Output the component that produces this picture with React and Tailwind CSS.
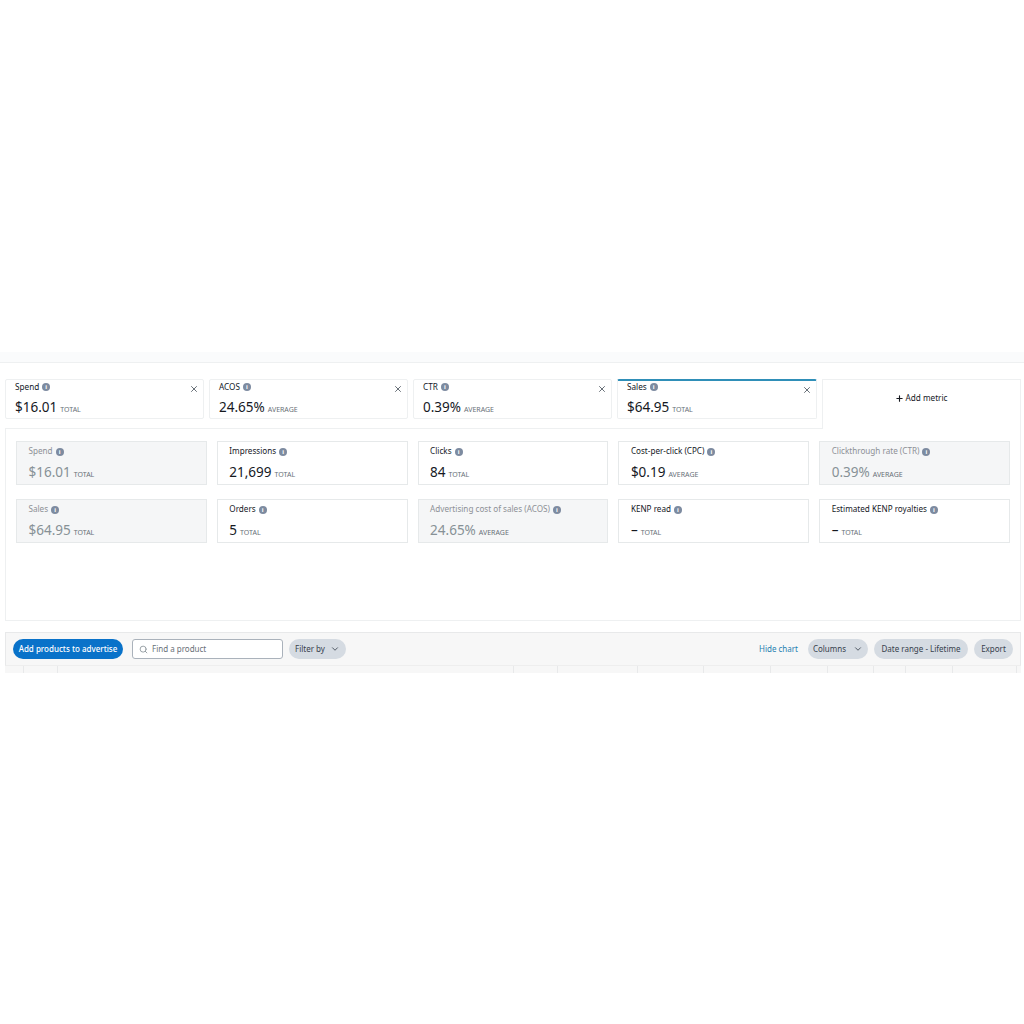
import React from "react";
import { Search, ChevronDown, X, Plus } from "lucide-react";

const font = { fontFamily: '"Noto Sans", sans-serif' };

function Info() {
  return (
    <span className="inline-flex items-center justify-center w-[8px] h-[8px] rounded-full bg-[#7d8ba0] text-white text-[6px] leading-none font-bold ml-[3px] align-middle shrink-0">
      i
    </span>
  );
}

function Tab({ label, value, unit, active }) {
  return (
    <div className={`relative h-[40px] bg-white border border-[#eef0f1] rounded-[2px] pl-[9px] ${active ? "w-[200px] border-t-2 border-t-[#2f8fb8] pt-[0.5px]" : "w-[199px] pt-[1.5px]"}`}>
      <div className="flex items-center h-[11px] text-[8.2px] text-[#111827]">
        {label}
        <Info />
      </div>
      <div className="flex items-baseline mt-[4.5px] h-[20px]">
        <span className="text-[13.5px] leading-[20px] text-[#16191f]">{value}</span>
        <span className="ml-[3px] text-[7px] text-[#687078]">{unit}</span>
      </div>
      <X className="absolute right-[4px] top-[4px] w-[10px] h-[10px] text-[#687078]" strokeWidth={2.4} />
    </div>
  );
}

function Metric({ label, value, unit, off }) {
  return (
    <div className={`h-[44px] border border-[#e6e9ea] pl-[11.5px] pt-[3.5px] ${off ? "bg-[#f5f6f7]" : "bg-white"}`}>
      <div className={`flex items-center h-[12px] text-[8.15px] ${off ? "text-[#8d9096]" : "text-[#16191f]"}`}>
        {label}
        <Info />
      </div>
      <div className="flex items-baseline mt-[4.5px] h-[20px]">
        <span className={`text-[13.5px] leading-[20px] ${off ? "text-[#879196]" : "text-[#16191f]"}`}>{value}</span>
        <span className="ml-[3px] text-[7px] text-[#687078]">{unit}</span>
      </div>
    </div>
  );
}

function Pill({ children, className = "" }) {
  return (
    <div className={`flex items-center justify-center h-[20px] rounded-full bg-[#d5dbe2] text-[8px] text-[#37414d] ${className}`}>
      {children}
    </div>
  );
}

const metrics = [
  ["Spend", "$16.01", "TOTAL", true],
  ["Impressions", "21,699", "TOTAL"],
  ["Clicks", "84", "TOTAL"],
  ["Cost-per-click (CPC)", "$0.19", "AVERAGE"],
  ["Clickthrough rate (CTR)", "0.39%", "AVERAGE", true],
  ["Sales", "$64.95", "TOTAL", true],
  ["Orders", "5", "TOTAL"],
  ["Advertising cost of sales (ACOS)", "24.65%", "AVERAGE", true],
  ["KENP read", "–", "TOTAL"],
  ["Estimated KENP royalties", "–", "TOTAL"],
];

const cols = [19, 34, 456, 44, 80, 66, 67, 57, 46, 32, 47, 64];

export default function App() {
  return (
    <div className="min-h-[1024px] bg-white pt-[352px]" style={font}>
      <div className="h-[11px] bg-[#fafbfc] border-b border-[#eef0f1]" />

      <div className="ml-[5px] mr-[3px] mt-[16px]">
        <div className="flex items-stretch h-[50px]">
          <div className="w-[817px] border-b border-[#eef0f1] flex gap-[5px] items-start">
            <Tab label="Spend" value="$16.01" unit="TOTAL" />
            <Tab label="ACOS" value="24.65%" unit="AVERAGE" />
            <Tab label="CTR" value="0.39%" unit="AVERAGE" />
            <Tab label="Sales" value="$64.95" unit="TOTAL" active />
          </div>
          <div className="flex-1 border border-b-0 border-[#eef0f1] bg-white flex items-center justify-center pb-[13px] text-[8.2px] text-[#16191f]">
            <Plus className="w-[9px] h-[9px] mr-[1px]" strokeWidth={3} />
            Add metric
          </div>
        </div>

        <div className="h-[192px] border border-t-0 border-[#eef0f1] bg-white px-[10px] pt-[12px]">
          <div className="grid grid-cols-5 gap-x-[10px] gap-y-[14px]">
            {metrics.map((m) => (
              <Metric key={m[0]} label={m[0]} value={m[1]} unit={m[2]} off={m[3]} />
            ))}
          </div>
        </div>

        <div className="mt-[11px] h-[34px] bg-[#f7f7f7] border border-[#e8e9ea] border-b-[#eeeeee] flex items-center pl-[7px] pr-[7px]">
          <div className="flex items-center justify-center w-[110px] h-[20px] rounded-full bg-[#0972c9] text-white text-[8px] font-medium">
            Add products to advertise
          </div>
          <div className="flex items-center ml-[9px] w-[151px] h-[20px] bg-white border border-[#aab2bb] rounded-[3px] pl-[6px] text-[8px] text-[#687078]">
            <Search className="w-[9px] h-[9px] text-[#879196]" strokeWidth={2.2} />
            <span className="ml-[4px]">Find a product</span>
          </div>
          <Pill className="ml-[6px] w-[57px]">
            Filter by
            <ChevronDown className="w-[10px] h-[10px] ml-[5px]" strokeWidth={2} />
          </Pill>
          <div className="ml-auto text-[8px] text-[#1f7fb0] mr-[10px]">Hide chart</div>
          <Pill className="w-[60px]">
            Columns
            <ChevronDown className="w-[10px] h-[10px] ml-[7px]" strokeWidth={2} />
          </Pill>
          <Pill className="ml-[6px] w-[94px]">Date range - Lifetime</Pill>
          <Pill className="ml-[6px] w-[39px]">Export</Pill>
        </div>

        <div className="flex h-[7px] bg-[#f7f7f7]">
          {cols.map((w, i) => (
            <div key={i} className="h-full border-r border-[#e8e9ea]" style={{ width: w }} />
          ))}
        </div>
      </div>
    </div>
  );
}
